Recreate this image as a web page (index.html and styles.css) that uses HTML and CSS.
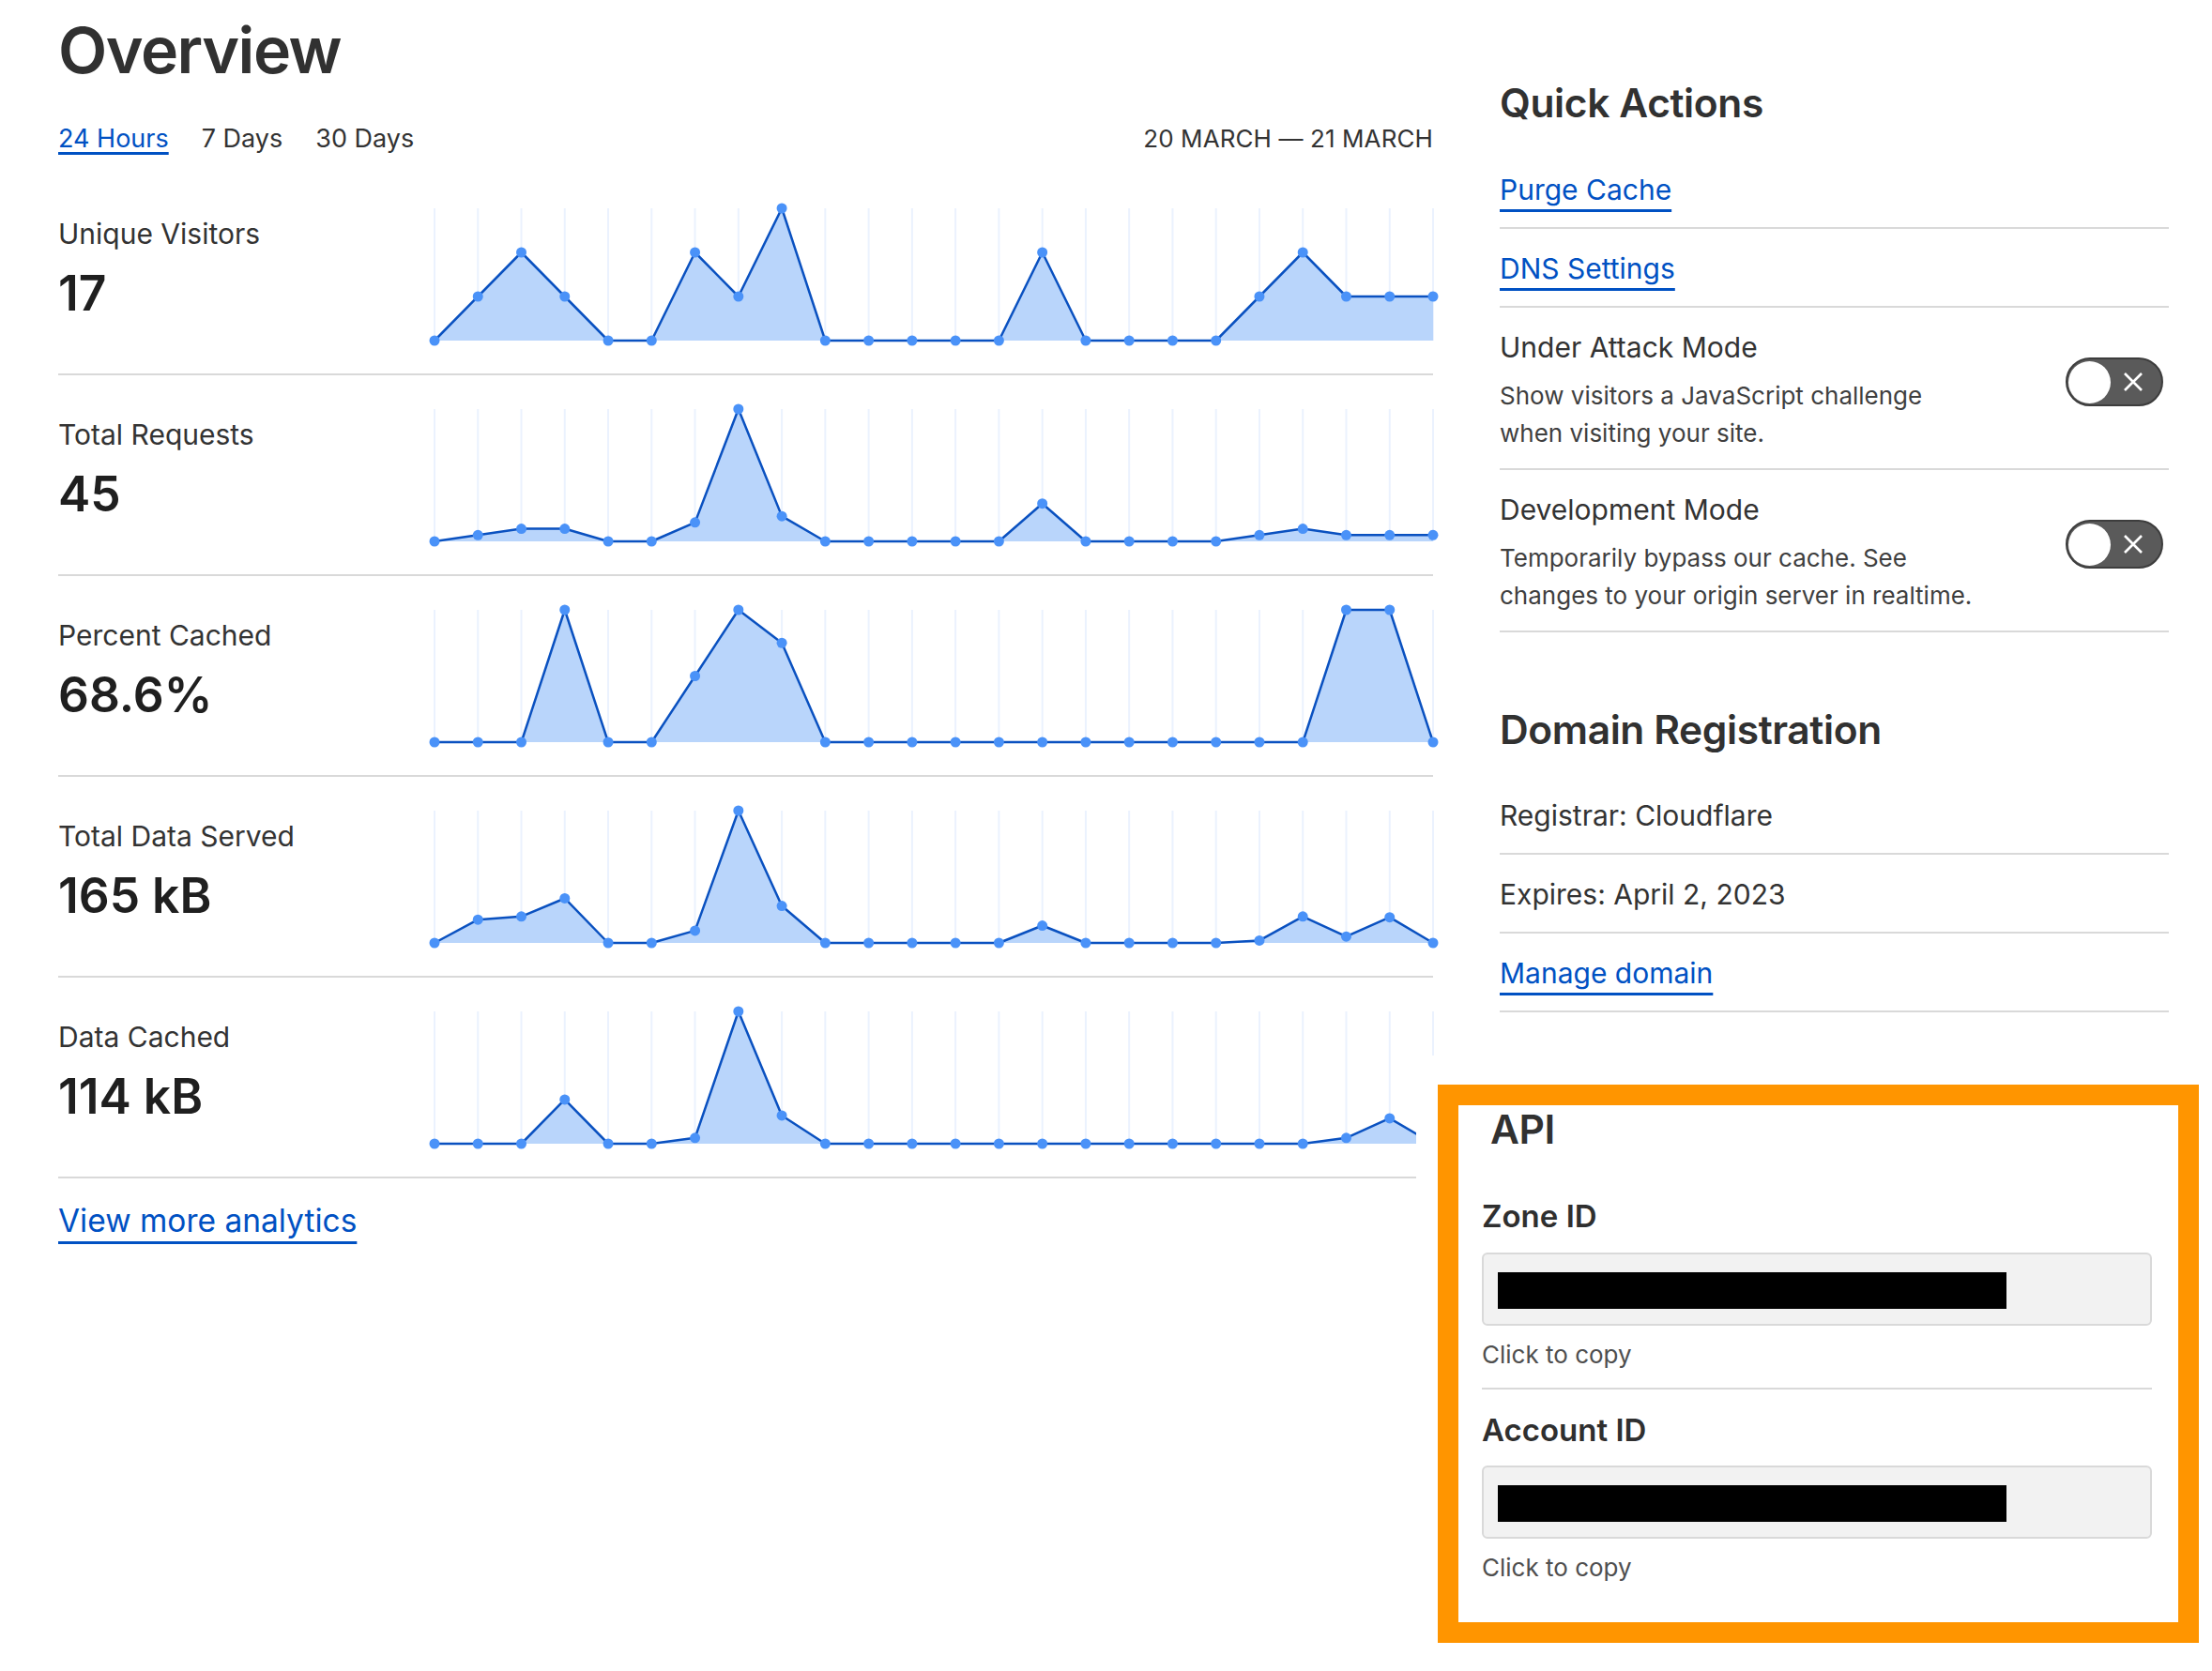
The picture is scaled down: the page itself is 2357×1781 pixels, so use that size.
FILE: index.html
```html
<!DOCTYPE html>
<html lang="en">
<head>
<meta charset="utf-8">
<title>Overview</title>
<link rel="stylesheet" href="styles.css">
</head>
<body>
<div class="page">
  <main class="overview">
    <h1 class="page-title">Overview</h1>
    <div class="range-bar">
      <nav class="range-tabs">
        <a class="range-tab is-active" href="#">24 Hours</a>
        <a class="range-tab" href="#">7 Days</a>
        <a class="range-tab" href="#">30 Days</a>
      </nav>
      <div class="range-dates">20 MARCH — 21 MARCH</div>
    </div>
    <section class="metrics">
      <div class="metric">
        <div class="metric-text">
          <div class="metric-label">Unique Visitors</div>
          <div class="metric-value">17</div>
        </div>
        <svg class="spark" data-series="visitors" width="1064" height="141" viewBox="0 0 1064 141"></svg>
      </div>
      <div class="metric">
        <div class="metric-text">
          <div class="metric-label">Total Requests</div>
          <div class="metric-value">45</div>
        </div>
        <svg class="spark" data-series="requests" width="1064" height="141" viewBox="0 0 1064 141"></svg>
      </div>
      <div class="metric">
        <div class="metric-text">
          <div class="metric-label">Percent Cached</div>
          <div class="metric-value">68.6%</div>
        </div>
        <svg class="spark" data-series="percent" width="1064" height="141" viewBox="0 0 1064 141"></svg>
      </div>
      <div class="metric">
        <div class="metric-text">
          <div class="metric-label">Total Data Served</div>
          <div class="metric-value">165 kB</div>
        </div>
        <svg class="spark" data-series="served" width="1064" height="141" viewBox="0 0 1064 141"></svg>
      </div>
      <div class="metric">
        <div class="metric-text">
          <div class="metric-label">Data Cached</div>
          <div class="metric-value">114 kB</div>
        </div>
        <svg class="spark" data-series="cached" width="1064" height="141" viewBox="0 0 1064 141"></svg>
      </div>
    </section>
    <a class="more-link" href="#">View more analytics</a>
  </main>

  <aside class="sidebar">
    <section class="side-section">
      <h2 class="side-title">Quick Actions</h2>
      <ul class="side-list">
        <li class="side-item"><a class="side-link" href="#">Purge Cache</a></li>
        <li class="side-item"><a class="side-link" href="#">DNS Settings</a></li>
        <li class="side-item toggle-item">
          <div class="toggle-text">
            <div class="toggle-title">Under Attack Mode</div>
            <p class="toggle-desc">Show visitors a JavaScript challenge<br>when visiting your site.</p>
          </div>
          <span class="toggle">
            <span class="toggle-knob"></span>
            <svg class="toggle-x" width="20" height="20" viewBox="0 0 20 20"><path d="M1 1 L19 19 M19 1 L1 19"/></svg>
          </span>
        </li>
        <li class="side-item toggle-item">
          <div class="toggle-text">
            <div class="toggle-title">Development Mode</div>
            <p class="toggle-desc">Temporarily bypass our cache. See<br>changes to your origin server in realtime.</p>
          </div>
          <span class="toggle">
            <span class="toggle-knob"></span>
            <svg class="toggle-x" width="20" height="20" viewBox="0 0 20 20"><path d="M1 1 L19 19 M19 1 L1 19"/></svg>
          </span>
        </li>
      </ul>
    </section>

    <section class="side-section">
      <h2 class="side-title side-title-next">Domain Registration</h2>
      <ul class="side-list side-list-domain">
        <li class="side-item">Registrar: Cloudflare</li>
        <li class="side-item">Expires: April 2, 2023</li>
        <li class="side-item"><a class="side-link" href="#">Manage domain</a></li>
      </ul>
    </section>

    <section class="api-cover">
      <div class="api-box">
        <h2 class="api-title">API</h2>
        <div class="api-field">
          <h3 class="api-label">Zone ID</h3>
          <div class="api-input"><span class="redacted"></span></div>
          <div class="api-hint">Click to copy</div>
        </div>
        <div class="api-field api-field-last">
          <h3 class="api-label">Account ID</h3>
          <div class="api-input"><span class="redacted"></span></div>
          <div class="api-hint">Click to copy</div>
        </div>
      </div>
    </section>
  </aside>
</div>
<script src="charts.js"></script>
</body>
</html>
```

FILE: styles.css
```css
html, body {
  margin: 0;
  background: #ffffff;
}

body {
  font-family: Inter, "Noto Sans", "Liberation Sans", sans-serif;
  color: #333333;
}

.page {
  display: flex;
  align-items: flex-start;
  gap: 71px;
  width: 2357px;
  box-sizing: border-box;
  padding: 0 46px 0 62px;
}

.overview {
  width: 1465px;
  flex: none;
}

.sidebar {
  width: 713px;
  flex: none;
}

/* ---------- left column ---------- */

.page-title {
  margin: 11px 0 0;
  font-size: 68px;
  line-height: 84px;
  font-weight: 600;
  letter-spacing: -1.5px;
  color: #313131;
}

.range-bar {
  display: flex;
  justify-content: space-between;
  align-items: baseline;
  margin-top: 35px;
  line-height: 36px;
}

.range-tabs {
  display: flex;
  gap: 35px;
}

.range-tab {
  font-size: 27px;
  color: #333333;
  text-decoration: none;
}

.range-tab.is-active {
  color: #0051c3;
  text-decoration: underline;
  text-decoration-thickness: 3px;
  text-underline-offset: 5px;
}

.range-dates {
  font-size: 26px;
  color: #333333;
  letter-spacing: 0.1px;
}

.metrics {
  margin-top: 20px;
}

.metric {
  display: flex;
  padding: 36px 0 35px;
  border-bottom: 2px solid #d9d9d9;
}

.metric-text {
  width: 401px;
  flex: none;
  padding-top: 9px;
}

.metric-label {
  font-size: 30px;
  line-height: 36px;
  color: #333333;
}

.metric-value {
  margin-top: 15px;
  font-size: 51.5px;
  line-height: 60px;
  font-weight: 600;
  color: #1f1f1f;
}

.spark {
  display: block;
  flex: none;
  overflow: visible;
}

.spark .grid {
  stroke: #ebf2fe;
  stroke-width: 2;
}

.spark .area {
  fill: #b9d5fb;
  stroke: none;
}

.spark .line {
  fill: none;
  stroke: #0a51c0;
  stroke-width: 2.5;
  stroke-linejoin: round;
}

.spark .dot {
  fill: #4a92f8;
}

.more-link {
  display: inline-block;
  margin-top: 25px;
  font-size: 33.5px;
  line-height: 40px;
  color: #0051c3;
  text-decoration: underline;
  text-decoration-thickness: 3px;
  text-underline-offset: 10px;
}

/* ---------- sidebar ---------- */

.side-title {
  margin: 84px 0 0;
  font-size: 42.5px;
  line-height: 52px;
  font-weight: 600;
  letter-spacing: -0.4px;
  color: #313131;
}

.side-title-next {
  margin-top: 78px;
}

.side-list {
  list-style: none;
  margin: 24px 0 0;
  padding: 0;
}

.side-list-domain {
  margin-top: 23px;
}

.side-item {
  padding: 24px 0 22px;
  border-bottom: 2px solid #d9d9d9;
  font-size: 30px;
  line-height: 36px;
  color: #333333;
}

.side-link {
  color: #0051c3;
  text-decoration: underline;
  text-decoration-thickness: 3px;
  text-underline-offset: 10px;
}

.toggle-item {
  display: flex;
  justify-content: space-between;
  align-items: flex-start;
  padding-bottom: 17px;
}

.toggle-title {
  font-size: 30px;
  line-height: 36px;
}

.toggle-desc {
  margin: 14px 0 0;
  font-size: 26px;
  line-height: 40px;
  color: #3f3f3f;
}

.toggle {
  display: flex;
  align-items: center;
  flex: none;
  width: 104px;
  height: 52px;
  box-sizing: border-box;
  margin: 29px 6px 0 0;
  border: 2px solid #3d3d3d;
  border-radius: 26px;
  background: #5a5a5a;
}

.toggle-knob {
  width: 45px;
  height: 45px;
  margin-left: 1px;
  border-radius: 50%;
  background: #ffffff;
}

.toggle-x {
  margin-left: 14px;
}

.toggle-x path {
  stroke: #ffffff;
  stroke-width: 2.6;
  fill: none;
}

/* ---------- API overlay ---------- */

.api-cover {
  position: relative;
  z-index: 1;
  margin: 46px -40px 0 -89px;
  padding: 31px 8px 30px 23px;
  background: #ffffff;
}

.api-box {
  width: 811px;
  box-sizing: border-box;
  border: 22px solid #ff9500;
  padding: 0 28px 42px 25px;
  background: #ffffff;
}

.api-title {
  margin: 0 0 0 9px;
  font-size: 42.5px;
  line-height: 52px;
  font-weight: 600;
  letter-spacing: -0.4px;
  color: #313131;
}

.api-field {
  padding-bottom: 19px;
  border-bottom: 2px solid #d9d9d9;
}

.api-field-last {
  padding-bottom: 0;
  border-bottom: none;
}

.api-label {
  margin: 46px 0 0;
  font-size: 33px;
  line-height: 40px;
  font-weight: 600;
  color: #2f2f2f;
}

.api-field-last .api-label {
  margin-top: 23px;
}

.api-input {
  display: flex;
  margin-top: 19px;
  height: 78px;
  box-sizing: border-box;
  padding: 19px 15px 16px;
  border: 2px solid #d9d9d9;
  border-radius: 6px;
  background: #f2f2f2;
}

.api-field-last .api-input {
  margin-top: 18px;
}

.redacted {
  width: 542px;
  height: 39px;
  background: #000000;
}

.api-hint {
  margin-top: 15px;
  font-size: 26px;
  line-height: 32px;
  color: #4f4f4f;
}
```

FILE: charts.js
```js
(function () {
  var W = 1064, H = 141, N = 24;
  var series = {
    visitors: [0,1,2,1,0,0,2,1,3,0,0,0,0,0,2,0,0,0,0,1,2,1,1,1],
    requests: [0,1,2,2,0,0,3,21,4,0,0,0,0,0,6,0,0,0,0,1,2,1,1,1],
    percent: [0,0,0,100,0,0,50,100,75,0,0,0,0,0,0,0,0,0,0,0,0,100,100,0],
    served: [0,0.176,0.2,0.337,0,0,0.093,1,0.28,0,0,0,0,0,0.131,0,0,0,0,0.018,0.2,0.048,0.194,0],
    cached: [0,0,0,0.334,0,0,0.044,1,0.213,0,0,0,0,0,0,0,0,0,0,0,0,0.044,0.192,0]
  };
  var step = W / (N - 1);
  var svgs = document.querySelectorAll('svg.spark');
  for (var k = 0; k < svgs.length; k++) {
    var svg = svgs[k];
    var vals = series[svg.getAttribute('data-series')];
    var max = Math.max.apply(null, vals);
    var pts = vals.map(function (v, i) {
      return [+(i * step).toFixed(2), +(H - (v / max) * H).toFixed(2)];
    });
    var s = '';
    pts.forEach(function (p) {
      s += '<line class="grid" x1="' + p[0] + '" y1="0" x2="' + p[0] + '" y2="' + H + '"/>';
    });
    var list = pts.map(function (p) { return p[0] + ',' + p[1]; }).join(' ');
    s += '<polygon class="area" points="0,' + H + ' ' + list + ' ' + W + ',' + H + '"/>';
    s += '<polyline class="line" points="' + list + '"/>';
    pts.forEach(function (p) {
      s += '<circle class="dot" cx="' + p[0] + '" cy="' + p[1] + '" r="5.5"/>';
    });
    svg.innerHTML = s;
  }
})();
```
